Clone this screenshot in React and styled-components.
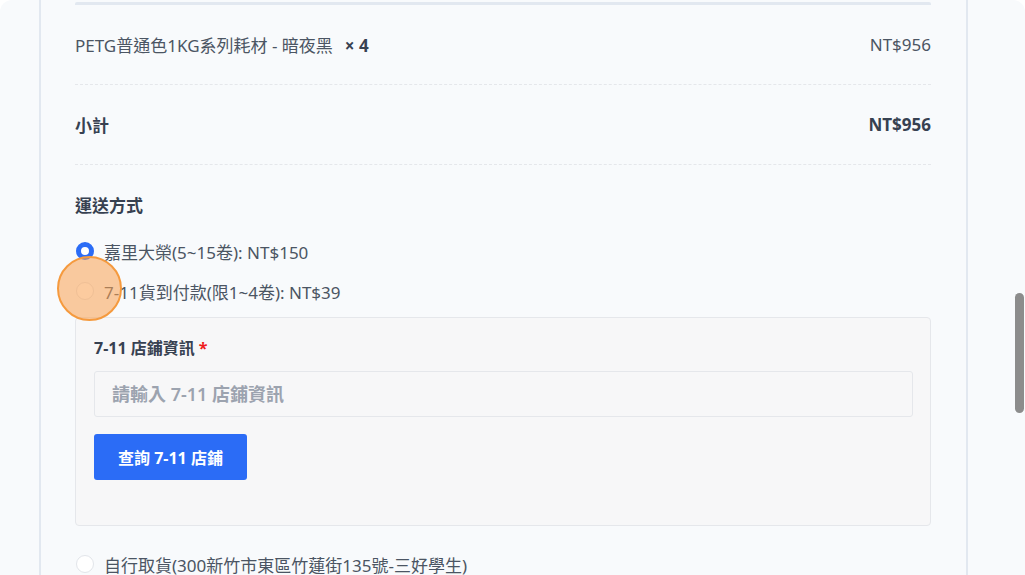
import styled, { createGlobalStyle } from "styled-components";

const GlobalStyle = createGlobalStyle`
  html, body {
    margin: 0;
    padding: 0;
    background: #ffffff;
    overflow: hidden;
  }
  body {
    font-family: "Noto Sans", "Noto Sans CJK TC", sans-serif;
    color: #4b5563;
  }
`

const Frame = styled.div`
  position: relative;
  height: 575px;
  background: #f8fafc;
  border-radius: 12px 12px 0 0;
  overflow: hidden;
`
const Card = styled.div`
  box-sizing: border-box;
  width: 929px;
  height: 100%;
  margin-left: 39px;
  padding: 2px 35px 0 34px;
  border-left: 2px solid #e2e8f0;
  border-right: 2px solid #e2e8f0;
`
const ItemList = styled.div`
  border-top: 3px solid #e2e8f0;
  border-radius: 2px;
`
const Row = styled.div`
  display: flex;
  justify-content: space-between;
  align-items: center;
  height: 79px;
  border-bottom: 1px dashed #e5e7eb;
  font-size: 17px;
  font-weight: ${p => p.$bold ? 700 : 400};
  color: ${p => p.$bold ? "#374151" : "#4b5563"};
`
const Qty = styled.span`
  margin-left: 12px;
  font-weight: 700;
  color: #374151;
`
const Section = styled.div`
  padding-top: 29px;
`
const Title = styled.div`
  font-size: 17px;
  line-height: 24px;
  font-weight: 700;
  color: #374151;
  margin-bottom: 13px;
`
const Option = styled.label`
  display: flex;
  align-items: center;
  gap: 10px;
  height: 40px;
  font-size: 17px;
  color: #4b5563;
`
const Radio = styled.span`
  box-sizing: border-box;
  flex: none;
  width: 18px;
  height: 18px;
  border-radius: 50%;
  background: #ffffff;
  border: ${p => p.$checked ? "5px solid #2b6cf6" : "1px solid #e2e5ea"};
  margin-left: 1px;
`
const StoreBox = styled.div`
  margin: 6px 0 18px;
  padding: 18px 17px 45px 18px;
  background: #f7f7f8;
  border: 1px solid #e5e7eb;
  border-radius: 4px;
`
const FieldLabel = styled.div`
  font-size: 16px;
  line-height: 24px;
  font-weight: 700;
  color: #374151;
  margin-bottom: 11px;
`
const Required = styled.span`
  color: #ef1c1c;
  margin-left: 4px;
`
const Input = styled.input`
  box-sizing: border-box;
  display: block;
  width: 100%;
  height: 46px;
  padding: 0 17px;
  background: #f7f7f8;
  border: 1px solid #e5e7eb;
  border-radius: 3px;
  font-family: inherit;
  font-size: 18px;
  font-weight: 600;
  &::placeholder {
    color: #9ca3af;
  }
`
const SearchButton = styled.button`
  margin-top: 17px;
  height: 46px;
  padding: 0 24px;
  background: #2b6cf6;
  color: #ffffff;
  border: none;
  border-radius: 3px;
  font-family: inherit;
  font-size: 16px;
  font-weight: 700;
`
const Cursor = styled.div`
  position: absolute;
  left: 57px;
  top: 256px;
  width: 65px;
  height: 65px;
  box-sizing: border-box;
  border-radius: 50%;
  border: 2px solid #f59a3e;
  background: rgba(249, 160, 80, 0.55);
`
const Scrollbar = styled.div`
  position: absolute;
  right: 1px;
  top: 293px;
  width: 9px;
  height: 120px;
  border-radius: 5px;
  background: #8c8c8c;
`

const App = () => {
  return (
    <Frame>
      <GlobalStyle />
      <Card>
        <ItemList>
          <Row>
            <span>PETG普通色1KG系列耗材 - 暗夜黑<Qty>× 4</Qty></span>
            <span>NT$956</span>
          </Row>
          <Row $bold>
            <span>小計</span>
            <span>NT$956</span>
          </Row>
        </ItemList>
        <Section>
          <Title>運送方式</Title>
          <Option><Radio $checked />嘉里大榮(5~15卷): NT$150</Option>
          <Option><Radio />7-11貨到付款(限1~4卷): NT$39</Option>
          <StoreBox>
            <FieldLabel>7-11 店鋪資訊<Required>*</Required></FieldLabel>
            <Input placeholder="請輸入 7-11 店鋪資訊" />
            <SearchButton>查詢 7-11 店鋪</SearchButton>
          </StoreBox>
          <Option><Radio />自行取貨(300新竹市東區竹蓮街135號-三好學生)</Option>
        </Section>
      </Card>
      <Cursor />
      <Scrollbar />
    </Frame>
  );
}

export default App;
